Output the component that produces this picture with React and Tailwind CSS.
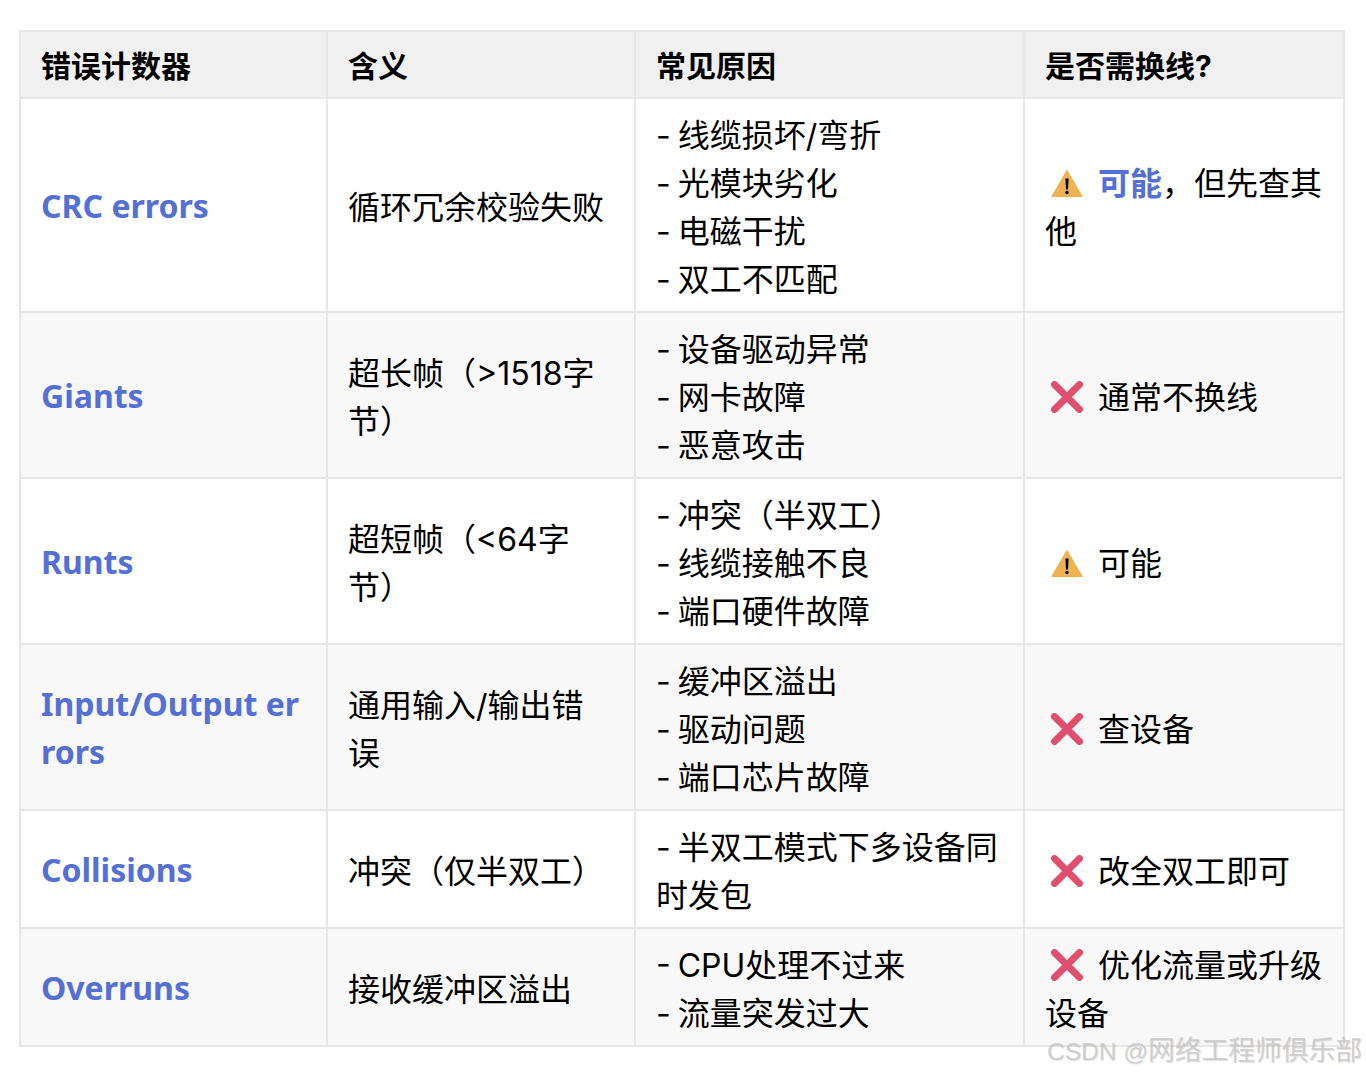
const font = "[font-family:'Inter','Noto_Sans_CJK_SC',sans-serif]";

function Warn() {
  return (
    <svg viewBox="0 0 32 32" className="inline-block w-[32px] h-[32px] ml-[6px] mr-[15px] align-[-4px]">
      <path d="M16 2.5 L31.5 29 Q32 30 31 30 L1 30 Q0 30 .5 29 Z" fill="#efb252" />
      <path d="M14.4 11.5 h3.2 l-.6 11 h-2 Z" fill="#000" />
      <circle cx="16" cy="25.5" r="1.7" fill="#000" />
    </svg>
  );
}

function Cross() {
  return (
    <svg viewBox="0 0 32 32" className="inline-block w-[32px] h-[32px] ml-[6px] mr-[15px] align-[-4px]">
      <path d="M3.5 3.5 L28.5 28.5 M28.5 3.5 L3.5 28.5" stroke="#e0506e" strokeWidth="7" strokeLinecap="round" />
    </svg>
  );
}

const rows = [
  {
    name: "CRC errors",
    meaning: "循环冗余校验失败",
    causes: ["- 线缆损坏/弯折", "- 光模块劣化", "- 电磁干扰", "- 双工不匹配"],
    swap: (
      <>
        <Warn />
        <strong className="font-bold text-[#5470d6]">可能</strong>，但先查其他
      </>
    ),
    height: "h-[214px]",
  },
  {
    name: "Giants",
    meaning: "超长帧（>1518字节）",
    causes: ["- 设备驱动异常", "- 网卡故障", "- 恶意攻击"],
    swap: (
      <>
        <Cross />
        通常不换线
      </>
    ),
    height: "h-[166px]",
  },
  {
    name: "Runts",
    meaning: "超短帧（<64字节）",
    causes: ["- 冲突（半双工）", "- 线缆接触不良", "- 端口硬件故障"],
    swap: (
      <>
        <Warn />
        可能
      </>
    ),
    height: "h-[166px]",
  },
  {
    name: "Input/Output errors",
    meaning: "通用输入/输出错误",
    causes: ["- 缓冲区溢出", "- 驱动问题", "- 端口芯片故障"],
    swap: (
      <>
        <Cross />
        查设备
      </>
    ),
    height: "h-[166px]",
  },
  {
    name: "Collisions",
    meaning: "冲突（仅半双工）",
    causes: ["- 半双工模式下多设备同时发包"],
    swap: (
      <>
        <Cross />
        改全双工即可
      </>
    ),
    height: "h-[118px]",
  },
  {
    name: "Overruns",
    meaning: "接收缓冲区溢出",
    causes: ["- CPU处理不过来", "- 流量突发过大"],
    swap: (
      <>
        <Cross />
        优化流量或升级设备
      </>
    ),
    height: "h-[118px]",
  },
];

const cell = "border-2 border-[#e7e7e7] px-[20px] pt-[13px] pb-[7px] align-middle break-all";
const nameCell = "border-2 border-[#e7e7e7] px-[20px] pt-[11px] pb-[9px] align-middle break-all font-bold text-[#5470d6] [font-family:'Noto_Sans',sans-serif]";
const head = "border-2 border-[#e7e7e7] px-[20px] pt-[10px] pb-[7px] align-middle text-left text-[30px] font-bold";

export default function App() {
  return (
    <div className={`relative h-[1074px] w-[1366px] overflow-hidden bg-white pl-[19px] pt-[30px] text-[32px] leading-[48px] text-black ${font}`}>
      <table className="w-[1324px] table-fixed border-collapse">
        <colgroup>
          <col className="w-[307px]" />
          <col className="w-[308px]" />
          <col className="w-[389px]" />
          <col className="w-[320px]" />
        </colgroup>
        <thead>
          <tr className="h-[67px] bg-[#f0f0f0]">
            <th className={head}>错误计数器</th>
            <th className={head}>含义</th>
            <th className={head}>常见原因</th>
            <th className={head}>是否需换线?</th>
          </tr>
        </thead>
        <tbody>
          {rows.map((row, i) => (
            <tr key={row.name} className={`${row.height} ${i % 2 === 0 ? "bg-white" : "bg-[#f8f8f8]"}`}>
              <td className={nameCell}>{row.name}</td>
              <td className={cell}>{row.meaning}</td>
              <td className={`${cell} [word-spacing:-2px]`}>
                {row.causes.map((c) => (
                  <div key={c}>{c}</div>
                ))}
              </td>
              <td className={cell}>{row.swap}</td>
            </tr>
          ))}
        </tbody>
      </table>
      <div className="absolute left-[1047px] top-[1033px] whitespace-nowrap text-[26.75px] leading-[36px] text-[#c8c8c8]/80 [font-family:'Liberation_Sans','Noto_Sans_CJK_SC',sans-serif] [text-shadow:1px_1px_1px_rgba(0,0,0,0.12)]">
        <span className="text-[24.5px]">CSDN @</span>网络工程师俱乐部
      </div>
    </div>
  );
}
